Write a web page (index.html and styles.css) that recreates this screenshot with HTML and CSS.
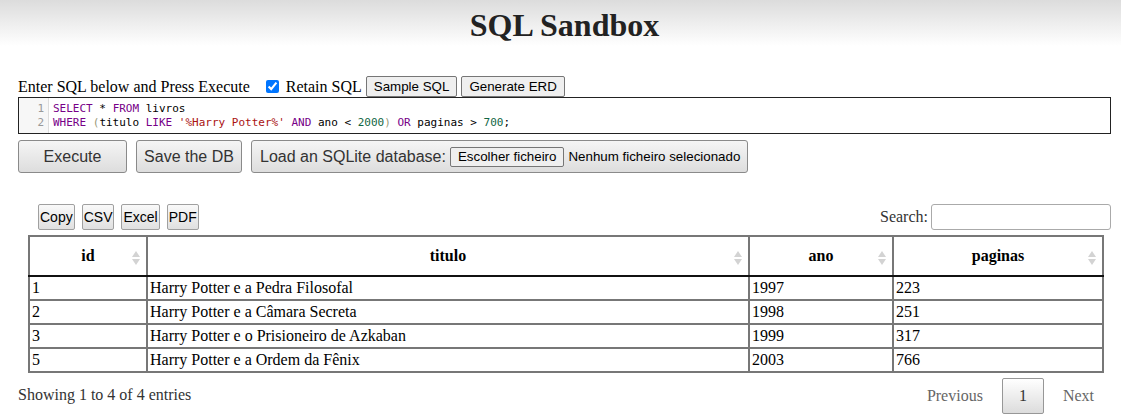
FILE: index.html
```html
<!DOCTYPE html>
<html>
<head>
<meta charset="utf-8">
<title>SQL Sandbox</title>
<link rel="stylesheet" href="styles.css">
</head>
<body>
<header class="header">
  <h1 class="title">SQL Sandbox</h1>
</header>
<main class="main">
  <div class="toolbar">
    <span class="label">Enter SQL below and Press Execute</span>
    <label class="retain"><input type="checkbox" checked class="check"> Retain SQL</label>
    <button class="small-btn">Sample SQL</button>
    <button class="small-btn">Generate ERD</button>
  </div>
  <div class="editor">
    <div class="gutter"><div>1</div><div>2</div></div>
    <div class="code">
      <div class="line"><span class="kw">SELECT</span> * <span class="kw">FROM</span> livros</div>
      <div class="line"><span class="kw">WHERE</span> <span class="br">(</span>titulo <span class="kw">LIKE</span> <span class="str">'%Harry Potter%'</span> <span class="kw">AND</span> ano &lt; <span class="num">2000</span><span class="br">)</span> <span class="kw">OR</span> paginas &gt; <span class="num">700</span>;</div>
    </div>
  </div>
  <div class="actions">
    <button class="big-btn execute">Execute</button>
    <button class="big-btn save">Save the DB</button>
    <label class="big-btn load">Load an SQLite database: <span class="file"><span class="small-btn file-btn">Escolher ficheiro</span><span class="file-name">Nenhum ficheiro selecionado</span></span></label>
  </div>

  <section class="dt">
    <div class="dt-top">
      <div class="dt-buttons">
        <button class="dt-btn">Copy</button>
        <button class="dt-btn">CSV</button>
        <button class="dt-btn">Excel</button>
        <button class="dt-btn">PDF</button>
      </div>
      <label class="search">Search:<input type="text" class="search-input"></label>
    </div>
    <table class="grid">
      <colgroup>
        <col class="c-id">
        <col class="c-title">
        <col class="c-ano">
        <col class="c-pag">
      </colgroup>
      <thead>
        <tr>
          <th>id<svg class="sort" width="8" height="14" viewBox="0 0 8 14"><path d="M4 0L8 6H0Z M4 14L0 8H8Z" fill="#d3d3d3"/></svg></th>
          <th>titulo<svg class="sort" width="8" height="14" viewBox="0 0 8 14"><path d="M4 0L8 6H0Z M4 14L0 8H8Z" fill="#d3d3d3"/></svg></th>
          <th>ano<svg class="sort" width="8" height="14" viewBox="0 0 8 14"><path d="M4 0L8 6H0Z M4 14L0 8H8Z" fill="#d3d3d3"/></svg></th>
          <th>paginas<svg class="sort" width="8" height="14" viewBox="0 0 8 14"><path d="M4 0L8 6H0Z M4 14L0 8H8Z" fill="#d3d3d3"/></svg></th>
        </tr>
      </thead>
      <tbody>
        <tr><td>1</td><td>Harry Potter e a Pedra Filosofal</td><td>1997</td><td>223</td></tr>
        <tr><td>2</td><td>Harry Potter e a Câmara Secreta</td><td>1998</td><td>251</td></tr>
        <tr><td>3</td><td>Harry Potter e o Prisioneiro de Azkaban</td><td>1999</td><td>317</td></tr>
        <tr><td>5</td><td>Harry Potter e a Ordem da Fênix</td><td>2003</td><td>766</td></tr>
      </tbody>
    </table>
    <div class="dt-bottom">
      <div class="info">Showing 1 to 4 of 4 entries</div>
      <div class="paging">
        <span class="page-link">Previous</span>
        <span class="page-link current">1</span>
        <span class="page-link">Next</span>
      </div>
    </div>
  </section>
</main>
</body>
</html>
```

FILE: styles.css
```css
html, body {
  margin: 0;
  padding: 0;
  background: #fff;
}
body {
  font-family: "Liberation Serif", "Times New Roman", serif;
  font-size: 16px;
  color: #000;
}
.header {
  height: 76px;
  box-sizing: border-box;
  padding: 7px 10px 0 18px;
  background: linear-gradient(#dcdcdc 0px, #ffffff 46px, #ffffff 100%);
}
.title {
  margin: 0;
  text-align: center;
  font-size: 32px;
  font-weight: bold;
  color: #222;
  line-height: 37px;
}
.main {
  padding: 0 10px 0 18px;
}
.toolbar {
  display: flex;
  align-items: center;
  height: 21px;
  white-space: nowrap;
}
.label {
  margin-right: 16px;
}
.retain {
  display: flex;
  align-items: center;
  margin-right: 4px;
}
.check {
  margin: 0 7px 0 0;
  width: 13px;
  height: 13px;
}
.small-btn {
  font-family: "Liberation Sans", Arial, sans-serif;
  font-size: 13.33px;
  color: #000;
  background: #efefef;
  border: 1px solid #767676;
  border-radius: 2px;
  padding: 1px 7px;
  height: 21px;
  box-sizing: border-box;
  line-height: 17px;
  margin: 0 4px 0 0;
  white-space: nowrap;
}
.editor {
  display: flex;
  border: 1px solid #222;
  height: 37px;
  box-sizing: border-box;
  font-family: "DejaVu Sans Mono", "Liberation Mono", monospace;
  font-size: 11px;
  line-height: 14px;
}
.gutter {
  width: 30px;
  box-sizing: border-box;
  background: #f7f7f7;
  border-right: 1px solid #ddd;
  color: #999;
  text-align: right;
  padding: 4px 4px 0 0;
}
.code {
  padding: 4px 0 0 4px;
  color: #000;
}
.line {
  white-space: pre;
}
.kw { color: #770088; }
.str { color: #aa1111; }
.num { color: #116644; }
.br { color: #999977; }
.actions {
  display: flex;
  gap: 9px;
  margin-top: 6px;
}
.big-btn {
  font-family: "Liberation Sans", Arial, sans-serif;
  font-size: 16px;
  color: #333;
  height: 33px;
  box-sizing: border-box;
  padding: 0 8px;
  border: 1px solid #8a8a8a;
  border-radius: 3px;
  background: linear-gradient(#f5f5f5, #dddddd);
  display: flex;
  align-items: center;
  white-space: nowrap;
  flex-shrink: 0;
}
.execute {
  width: 109px;
  justify-content: center;
}
.save {
  width: 106px;
  justify-content: center;
  padding: 0;
}
.load {
  width: 497px;
}
.file {
  display: flex;
  align-items: center;
  margin-left: 4px;
}
.file-btn {
  display: inline-block;
  height: 20px;
  line-height: 16px;
  color: #000;
  margin-right: 4px;
}
.file-name {
  font-size: 13.33px;
  color: #000;
}
.dt {
  margin-top: 31px;
}
.dt-top {
  display: flex;
  justify-content: space-between;
  align-items: center;
  height: 26px;
}
.dt-buttons {
  display: flex;
  gap: 7px;
  padding-left: 20px;
}
.dt-btn {
  font-family: "Liberation Sans", Arial, sans-serif;
  font-size: 14px;
  color: #000;
  height: 26px;
  box-sizing: border-box;
  padding: 0 1px;
  border: 1px solid #a0a0a0;
  border-radius: 2px;
  background: linear-gradient(#f9f9f9, #e0e0e0);
  margin: 0;
}
.search {
  display: flex;
  align-items: center;
  color: #333;
}
.search-input {
  margin-left: 3px;
  width: 180px;
  height: 26px;
  box-sizing: border-box;
  border: 1px solid #aaa;
  border-radius: 3px;
  padding: 5px;
  background: transparent;
}
.grid {
  margin: 5px 9px 0 10px;
  width: 1074px;
  border-collapse: collapse;
  border: 2px solid #111;
  table-layout: fixed;
}
.grid th, .grid td {
  border: 2px solid #777;
}
.grid th {
  position: relative;
  font-weight: bold;
  text-align: center;
  line-height: 18px;
  padding: 10px 18px;
  border-bottom: 2px solid #111;
}
.grid td {
  text-align: left;
  line-height: 20px;
  padding: 1px 2px;
}
.c-id { width: 118px; }
.c-title { width: 602px; }
.c-ano { width: 144px; }
.c-pag { width: 210px; }
.sort {
  position: absolute;
  right: 6px;
  top: 14px;
}
.dt-bottom {
  display: flex;
  justify-content: space-between;
  align-items: flex-start;
}
.info {
  padding-top: 13px;
  color: #333;
}
.paging {
  display: flex;
  margin-top: 5px;
}
.page-link {
  padding: 8px 16px;
  line-height: 18px;
  color: #666;
  border: 1px solid transparent;
  border-radius: 2px;
  margin-left: 2px;
}
.current {
  color: #333;
  border: 1px solid #979797;
  background: linear-gradient(#ffffff, #dcdcdc);
}
```
